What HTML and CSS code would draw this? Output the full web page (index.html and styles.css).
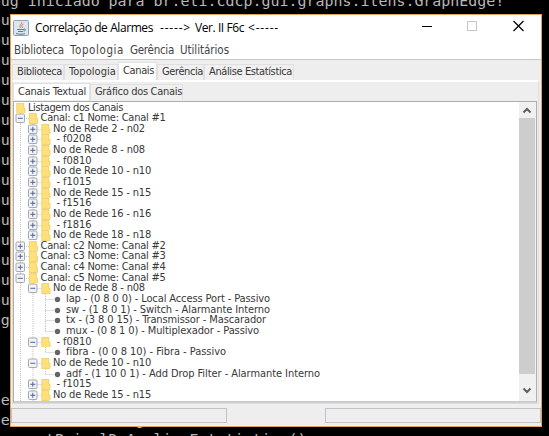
FILE: index.html
```
<!DOCTYPE html>
<html lang="pt"><head><meta charset="utf-8"><title>Correlação de Alarmes</title><link rel="stylesheet" href="styles.css"></head>
<body>
<pre class="console" id="console"></pre>
<main class="window">
<header class="title">
<svg class="java" viewBox="0 0 16 16"><rect x=".5" y=".5" width="15" height="15" rx="1" fill="#dce6ee" stroke="#8fa1b3"/><path d="M8.500 2c1 2-3 3-1 6M10.500 4c-2 1-2 2-1 4" fill="none" stroke="#df7b31"/><path d="M4 9.500h7M5 11.500h5M11 9c2-.5 2 2-.5 2M3 13.500c3 1 7 1 9 0" fill="none" stroke="#54799a"/></svg>
<div class="caption"><span data-w="118">Correlação de Alarmes</span><span data-w="31">-----&gt;</span><span data-w="49">Ver. II F6c</span><span data-w="31">&lt;-----</span></div>
<svg class="controls" viewBox="0 0 102 12"><path d="M0 6.500h10" stroke="#000"/><rect x="45.500" y="1.500" width="9" height="9" fill="none" stroke="#c5c5c5"/><path d="M91.500 1l10 10M101.500 1l-10 10" stroke="#000" stroke-width="1.200"/></svg>
</header>
<nav class="menu"><span data-w="50">Biblioteca</span><span data-w="54">Topologia</span><span data-w="44">Gerência</span><span data-w="49">Utilitários</span></nav>
<section class="work">
<div class="tabs"><div class="tab t1"><span data-w="45">Biblioteca</span></div><div class="tab t2"><span data-w="47">Topologia</span></div><div class="tab t3 active"><span data-w="31">Canais</span></div><div class="tab t4"><span data-w="41">Gerência</span></div><div class="tab t5"><span data-w="83">Análise Estatística</span></div></div>
<div class="panel">
<div class="tabs sub"><div class="tab s1 active"><span data-w="68">Canais Textual</span></div><div class="tab s2"><span data-w="87">Gráfico dos Canais</span></div></div>
<div class="scrollpane"><div class="tree" id="tree"></div><div class="scroll"><svg viewBox="0 0 16 16"><path d="M4.500 10.500L8 7l3.500 3.500" fill="none" stroke="#606060" stroke-width="2"/></svg><i></i><svg viewBox="0 0 16 16"><path d="M4.500 5.500L8 9l3.500-3.500" fill="none" stroke="#606060" stroke-width="2"/></svg></div></div>
</div></section>
<footer><div></div><div></div></footer>
</main>
<script src="app.js"></script>
</body></html>
```
FILE: styles.css
```
*{box-sizing:border-box}
body{margin:0;width:549px;height:436px;overflow:hidden;background:#000;position:relative;font-family:"DejaVu Sans Condensed","DejaVu Sans",sans-serif;font-stretch:condensed}
.console{position:absolute;left:-8.300px;top:-8.500px;margin:0;font:14.950px/19.950px "DejaVu Sans Mono",monospace;color:#b8b8b8}
.window{position:absolute;left:10px;top:14px;width:532px;height:413px;border:1px solid #dfa659;background:#fff;display:flex;flex-direction:column}
span{white-space:nowrap;display:inline-block}
.title{height:26px;display:flex;padding:5px 0 0 2px;font:12px/16px "Open Sans",sans-serif;color:#000}
.java{width:16px;height:16px}
.caption{display:flex;gap:4px;margin-left:6px;width:387px}
.caption span:first-child{margin-right:3px}
.controls{width:102px;height:12px;flex:none}
.menu{height:18px;display:flex;gap:6px;padding-left:3px;font-size:11.500px;line-height:18px;color:#444}
.work{height:345px;border-top:1px solid #c6c6c6;background:#eee;padding:2px 2px 0 1px}
.tabs{display:flex;align-items:flex-end;height:18px;font-size:11px;color:#383838}
.tab{height:16px;line-height:14px;border:1px solid #e0e0e0;border-bottom:0;background:#f0f0f0;padding-left:4px}
.tab.active{background:#fff;height:18px;line-height:15px}
.t1{width:52px}.t2{width:54px}.t3{width:39px}.t4{width:47px}.t5{width:90px}
.panel{height:324px;border:1px solid #dedede;border-top:2px solid #fff;padding-top:1px}
.sub{height:17px}.s1{width:77px}.s2{width:93px}
.sub .active{height:17px}
.scrollpane{height:302px;margin-top:1px;border:1px solid #a9adb5;border-bottom:2px solid #ccc;background:#fff;display:flex;overflow:hidden;margin-right:1px}
.tree{flex:1;overflow:hidden;padding:.5px 0 0 1px;font-size:11px;color:#383838}
.row{height:10.650px;display:flex;align-items:center;line-height:10.650px}
.row svg{height:10.650px;flex:none;display:block}
.scroll{width:17px;display:flex;flex-direction:column;background:#f0f0f0}
.scroll svg{width:16px;height:16px}
.scroll i{height:256px;background:#cdcdcd;width:16px}
.scroll svg:last-child{margin-top:9px}
footer{height:22px;background:#eee;padding-top:4px;display:flex;justify-content:space-between}
footer div{width:216px;height:15px;border:1px solid #c0c2c6}
```
FILE: app.js
```
const rows = [
[0,'','Listagem dos Canais',95],[1,'-','Canal: c1 Nome: Canal #1',125],
[2,'+','No de Rede 2 - n02',92],[2,'+',' - f0208',35],[2,'+','No de Rede 8 - n08',92],[2,'+',' - f0810',35],
[2,'+','No de Rede 10 - n10',98],[2,'+',' - f1015',35],[2,'+','No de Rede 15 - n15',98],[2,'+',' - f1516',35],
[2,'+','No de Rede 16 - n16',98],[2,'+',' - f1816',35],[2,'+','No de Rede 18 - n18',98],
[1,'+','Canal: c2 Nome: Canal #2',125],[1,'+','Canal: c3 Nome: Canal #3',125],[1,'+','Canal: c4 Nome: Canal #4',125],[1,'-','Canal: c5 Nome: Canal #5',125],
[2,'-','No de Rede 8 - n08',92],[3,'o','lap - (0 8 0 0) - Local Access Port - Passivo',204],[3,'o','sw - (1 8 0 1) - Switch - Alarmante Interno',204],
[3,'o','tx - (3 8 0 15) - Transmissor - Mascarador',200],[3,'o','mux - (0 8 1 0) - Multiplexador - Passivo',193],
[2,'-',' - f0810',35],[3,'o','fibra - (0 0 8 10) - Fibra - Passivo',160],[2,'-','No de Rede 10 - n10',98],
[3,'o','adf - (1 10 0 1) - Add Drop Filter - Alarmante Interno',254],[2,'+',' - f1015',35],[2,'+','No de Rede 15 - n15',98],[2,'','',0]];
const H = 10.65;
document.getElementById('tree').innerHTML = rows.map(([d, k, text, w], i) => {
  const W = [13, 25.5, 38, 51][d];
  let s = '';
  const line = p => s += `<path d="${p}" stroke="#c2c2c2" stroke-dasharray="1 1" fill="none"/>`;
  if (d > 0) line(`M5.5 0V${H}`);
  if (d > 1) line(`M18 0V${i === 12 ? 5.5 : H}`);
  if (d === 3) line(`M30.5 0V${[21, 23, 25].includes(i) ? 5.5 : H}M30.5 5.5H39`);
  if (k === '+' || k === '-') {
    const x = d === 1 ? 5 : 17.5;
    line(`M${x + 4} 5.5H${x + 9}`);
    s += `<rect x="${x - 4}" y="1" width="8.5" height="8.5" rx="1" fill="#f1f3f6" stroke="#a6a8ac"/><path d="M${x - 2.2} 5.3h5${k === '+' ? `M${x + .3} 2.8v5` : ''}" stroke="#4a63a0"/>`;
  }
  if (k === 'o') s += '<circle cx="42.5" cy="5.5" r="2.7" fill="#656565"/>';
  else { const x = W - 11.2; s += `<path d="M${x} .3h7v5h1.2v5.3H${x}z" fill="#ffe07c" stroke="#e9c655" stroke-width=".7"/>`; }
  return `<div class="row"><svg width="${W}" viewBox="0 0 ${W} ${H}">${s}</svg><span style="margin-left:${text[0] === ' ' ? 3.5 : 0}px" data-w="${w}">${text}</span></div>`;
}).join('');
const lines = ['bug iniciado para br.eti.cdcp.gui.graphs.itens.GraphEdge!'];
for (let i = 0; i < 15; i++) lines.push('bu');
lines.push('og', '-', '-', '-', 'ce', 'ce' + ' '.repeat(14) + 'g' + ' '.repeat(29) + '()', '    getPainelDeAnaliseEstatistica()');
document.getElementById('console').textContent = lines.join('\n');
document.querySelectorAll('[data-w]').forEach(e => {
  const w = +e.dataset.w, n = e.textContent.trim().length;
  if (n) e.style.letterSpacing = (w - e.getBoundingClientRect().width) / n + 'px';
});
```
